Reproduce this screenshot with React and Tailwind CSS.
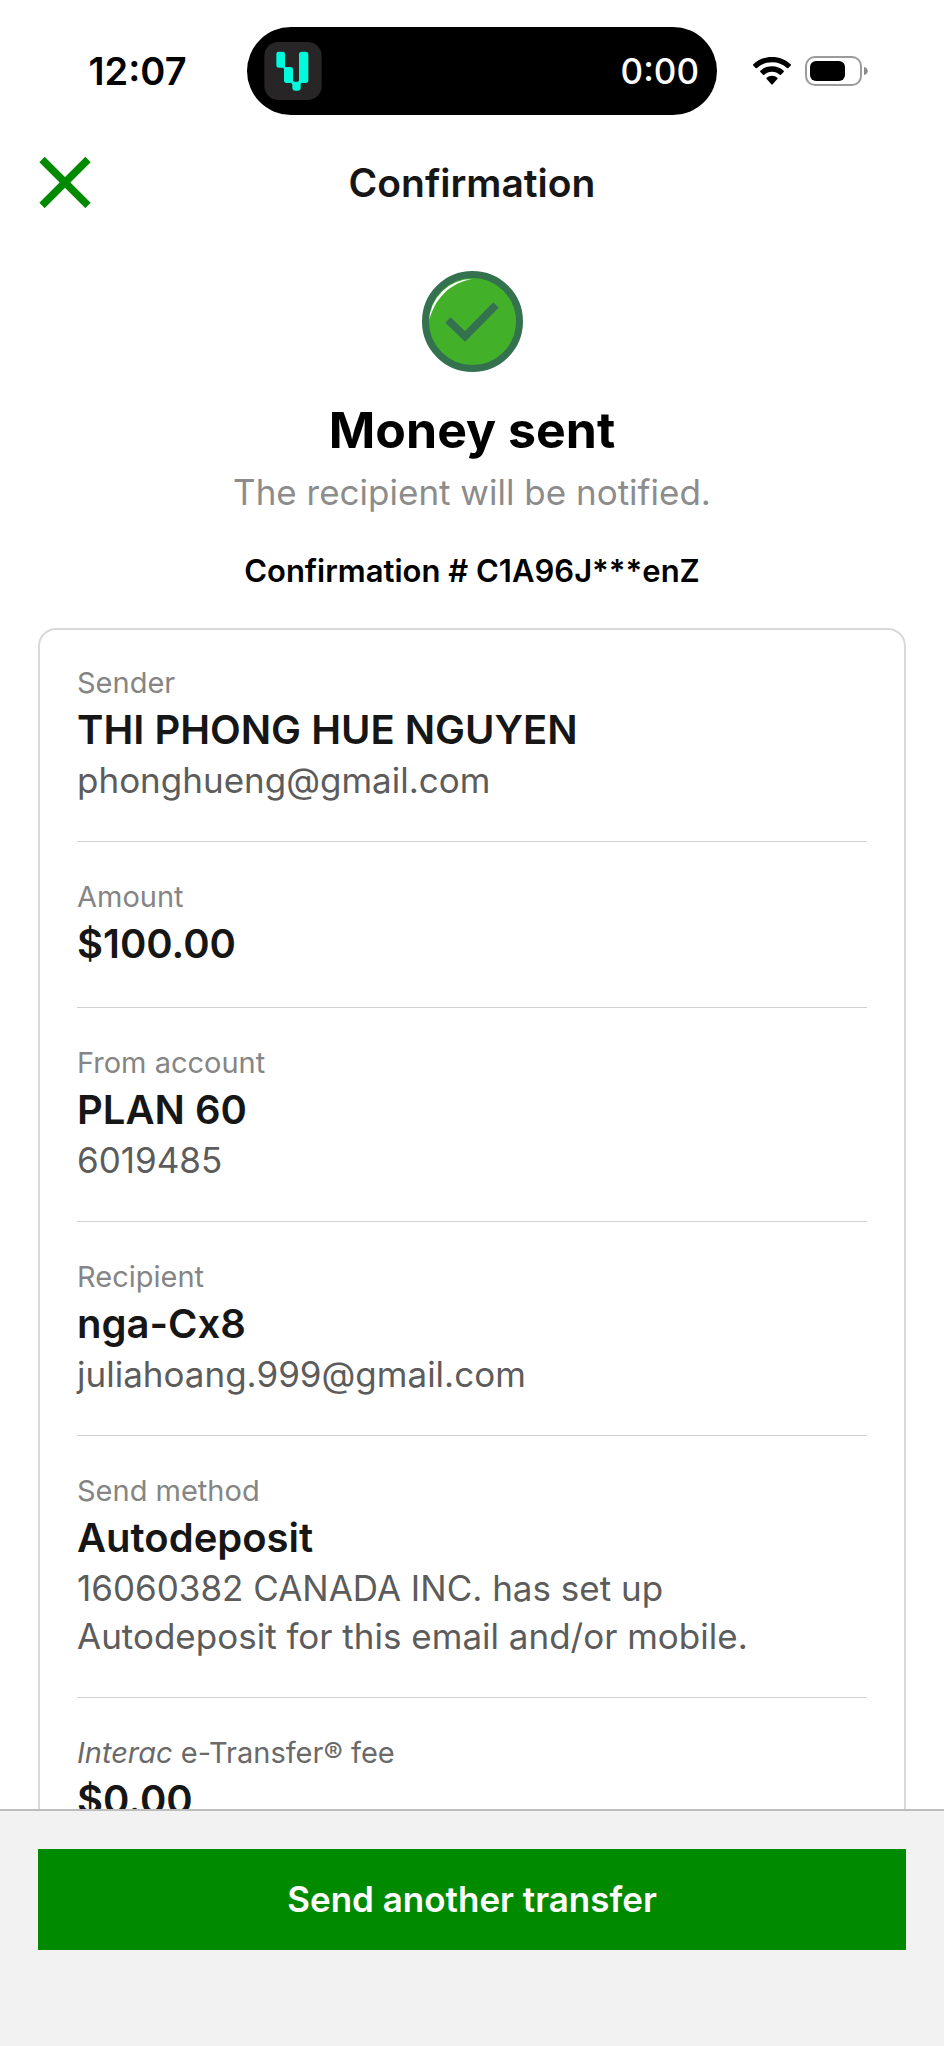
const details = [
  {
    label: "Sender",
    value: "THI PHONG HUE NGUYEN",
    lines: ["phonghueng@gmail.com"],
  },
  { label: "Amount", value: "$100.00", lines: [] },
  { label: "From account", value: "PLAN 60", lines: ["6019485"] },
  {
    label: "Recipient",
    value: "nga-Cx8",
    lines: ["juliahoang.999@gmail.com"],
  },
  {
    label: "Send method",
    value: "Autodeposit",
    lines: [
      "16060382 CANADA INC. has set up",
      "Autodeposit for this email and/or mobile.",
    ],
  },
  {
    label: (
      <>
        <em>Interac</em> e-Transfer® fee
      </>
    ),
    value: "$0.00",
    lines: [],
    dark: true,
  },
];

function AppLogo() {
  return (
    <svg viewBox="0 0 172 174" className="h-[58px] w-[58px]" aria-hidden="true">
      <rect width="172" height="174" rx="42" fill="#272525" />
      <path
        fill="#00fbdc"
        d="M36 36q0-7 7-7h12q7 0 7 7v39h16q8 0 8 8v32q0 4 4 4h10q4 0 4-4V37q0-8 8-8h12q8 0 8 8v78q0 8-8 8h-12q-3 0-3 4v10q0 9-9 9h-7q-9 0-9-9v-9q0-5-5-5h-12q-8 0-8-8v-33q0-5-5-5h-10q-8 0-8-8z"
      />
    </svg>
  );
}

function WifiIcon() {
  return (
    <svg viewBox="0 0 114 84" className="h-7 w-[38px]" aria-hidden="true">
      <path d="M57 0C35 0 15 8 1 22q-2 2 0 4l7 7q2 2 4 0C24 22 40 16 57 16s33 6 45 17q2 2 4 0l7-7q2-2 0-4C99 8 79 0 57 0z" />
      <path d="M57 28c-14 0-26 5-35 13q-2 2 0 4l8 8q2 2 4 0c6-6 14-9 23-9s17 3 23 9q2 2 4 0l8-8q2-2 0-4c-9-8-21-13-35-13z" />
      <path d="M57 56c-6 0-12 2-16 6q-2 2 0 4l14 16q2 2 4 0l14-16q2-2 0-4c-4-4-10-6-16-6z" />
    </svg>
  );
}

function BatteryIcon() {
  return (
    <svg viewBox="0 0 64 30" className="h-[30px] w-16" aria-hidden="true">
      <rect x="1" y="1" width="55" height="28" rx="9" fill="none" stroke="#9b9b9b" strokeWidth="2" />
      <rect x="5" y="5" width="35" height="20" rx="6" />
      <path d="M59 11c5 1 5 7 0 8z" fill="#8b8b8b" />
    </svg>
  );
}

function StatusBar() {
  return (
    <div className="grid grid-cols-[1fr_auto_1fr] items-center pt-[27px] pl-5">
      <div className="pl-2 text-center text-[38px] leading-[48px] font-semibold">
        12:07
      </div>
      <div className="flex h-[88px] w-[470px] items-center justify-between rounded-full bg-black pr-[18px] pl-[17px]">
        <AppLogo />
        <span className="text-[35px] leading-[48px] font-medium text-white">
          0:00
        </span>
      </div>
      <div className="flex items-center gap-[14px] pl-9">
        <WifiIcon />
        <BatteryIcon />
      </div>
    </div>
  );
}

function SuccessIcon() {
  return (
    <svg viewBox="0 0 101 101" className="h-[101px] w-[101px]" aria-hidden="true">
      <circle cx="50.5" cy="50.5" r="47" fill="#43b02a" stroke="#34714f" strokeWidth="7" />
      <path d="M7 50A43.5 43.5 0 0 1 50 8C28 12 13 27 7 50z" fill="#fff" />
      <path d="M26 49L43 65.500L74 34" fill="none" stroke="#34714f" strokeWidth="7.500" />
    </svg>
  );
}

function DetailRow({ label, value, lines, dark }) {
  return (
    <div className="border-b border-[#d0d0d0] pt-[34px] pb-[37px] first:pt-8 last:border-b-0">
      <dt className={`text-[29px] leading-[42px] ${dark ? "text-[#6a6a6a]" : "text-[#858585]"}`}>
        {label}
      </dt>
      <dd className="text-[40px] leading-[52px] font-semibold text-[#161616]">
        {value}
      </dd>
      {lines.map((line) => (
        <dd key={line} className="text-[35px] leading-[48px] text-[#5c5c5c]">
          {line}
        </dd>
      ))}
    </div>
  );
}

export default function App() {
  return (
    <div className="flex h-screen flex-col bg-white font-['Inter',sans-serif] text-black">
      <StatusBar />

      {/* Header */}
      <header className="grid grid-cols-[1fr_auto_1fr] items-center px-[38px] pt-[41px]">
        <button type="button" aria-label="Close" className="justify-self-start">
          <svg viewBox="0 0 53 52" className="h-[52px] w-[53px]" aria-hidden="true">
            <path d="M4 3.500L50 49.500M50 3.500L4 49.500" stroke="#008a00" strokeWidth="7.500" />
          </svg>
        </button>
        <h1 className="text-[39px] leading-[51px] font-semibold text-[#161616]">
          Confirmation
        </h1>
      </header>

      <main className="min-h-0 flex-1 overflow-y-auto px-[38px] pt-[63px] [scrollbar-width:none]">
        {/* Result */}
        <section className="flex flex-col items-center text-center">
          <SuccessIcon />
          <h2 className="mt-6 text-[50px] leading-[68px] font-bold">Money sent</h2>
          <p className="mt-1 text-[35px] leading-[48px] text-[#8c8c8c]">
            The recipient will be notified.
          </p>
          <p className="mt-[34px] text-[31px] leading-[42px] font-semibold">
            Confirmation # C1A96J***enZ
          </p>
        </section>

        {/* Transfer details */}
        <dl className="mt-9 rounded-[18px] border-2 border-[#d9d9d9] px-[37px]">
          {details.map((item) => (
            <DetailRow key={item.value} {...item} />
          ))}
        </dl>
      </main>

      <footer className="border-t-2 border-[#bdbdbd] bg-[#f2f2f2] px-[38px] pt-[38px] pb-24">
        <button
          type="button"
          className="w-full bg-[#008a00] py-[26px] text-[35px] leading-[49px] font-semibold text-white"
        >
          Send another transfer
        </button>
      </footer>
    </div>
  );
}
